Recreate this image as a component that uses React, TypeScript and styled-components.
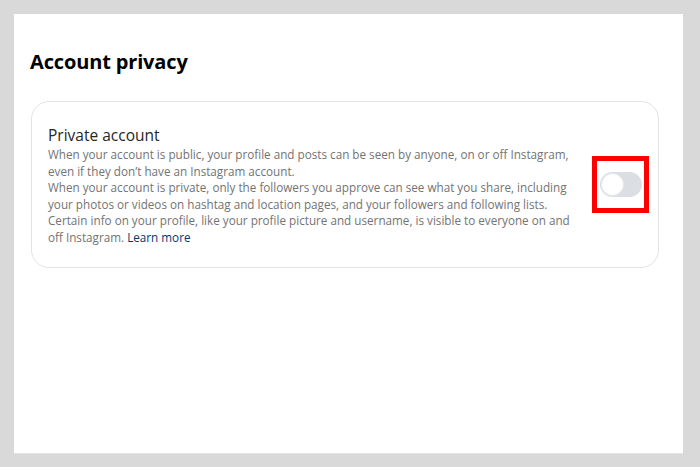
import React, { useState } from 'react';
import styled, { createGlobalStyle } from 'styled-components';

const GlobalStyle = createGlobalStyle`
  body {
    margin: 0;
    background: #d9d9d9;
    font-family: 'Open Sans', 'Liberation Sans', sans-serif;
  }
`;

const Page = styled.div`
  padding: 14px 17px 14px 14px;
  height: 467px;
  box-sizing: border-box;
`;

const Panel = styled.main`
  background: #fff;
  height: 439px;
  box-sizing: border-box;
  padding: 34px 24px 0 16px;
  box-shadow: 0 1px 0 #e4e4e4;
`;

const Title = styled.h1`
  margin: 0 0 26px;
  font-size: 20px;
  line-height: 27px;
  font-weight: 700;
  color: #000;
  letter-spacing: -0.15px;
`;

const Card = styled.section`
  display: flex;
  align-items: center;
  gap: 14px;
  margin-left: 1px;
  padding: 22px 9px 21px 16px;
  border: 1px solid #e3e3e3;
  border-radius: 18px;
`;

const Info = styled.div`
  flex: 1;
`;

const Heading = styled.h2`
  margin: 0;
  font-size: 15.5px;
  line-height: 22px;
  font-weight: 400;
  color: #262626;
`;

const Para = styled.p`
  margin: 0;
  font-size: 11.7px;
  line-height: 16.6px;
  color: #737373;
`;

const Link = styled.a`
  color: #00376b;
  text-decoration: none;
`;

const Highlight = styled.div`
  display: flex;
  align-items: center;
  justify-content: center;
  width: 57px;
  height: 57px;
  box-sizing: border-box;
  border: 5px solid #f00;
  margin-top: -1px;
`;

const Track = styled.button<{ $on: boolean }>`
  position: relative;
  width: 42px;
  height: 25px;
  padding: 0;
  border: none;
  border-radius: 13px;
  background: ${(p) => (p.$on ? '#0095f6' : '#dbdfe4')};
  cursor: pointer;
`;

const Knob = styled.span<{ $on: boolean }>`
  position: absolute;
  top: 1px;
  left: ${(p) => (p.$on ? '18px' : '1px')};
  width: 23px;
  height: 23px;
  box-sizing: border-box;
  border-radius: 50%;
  background: #fff;
  border: 1px solid #e6e8eb;
  transition: left 0.2s;
`;

const App: React.FC = () => {
  const [priv, setPriv] = useState(false);

  return (
    <>
      <GlobalStyle />
      <Page>
        <Panel>
          <Title>Account privacy</Title>
          <Card>
            <Info>
              <Heading>Private account</Heading>
              <Para>
                When your account is public, your profile and posts can be seen by anyone, on or off Instagram,
                even if they don’t have an Instagram account.
              </Para>
              <Para>
                When your account is private, only the followers you approve can see what you share, including
                your photos or videos on hashtag and location pages, and your followers and following lists.
                Certain info on your profile, like your profile picture and username, is visible to everyone on and
                off Instagram. <Link href="#">Learn more</Link>
              </Para>
            </Info>
            <Highlight>
              <Track $on={priv} onClick={() => setPriv(!priv)}>
                <Knob $on={priv} />
              </Track>
            </Highlight>
          </Card>
        </Panel>
      </Page>
    </>
  );
};

export default App;
